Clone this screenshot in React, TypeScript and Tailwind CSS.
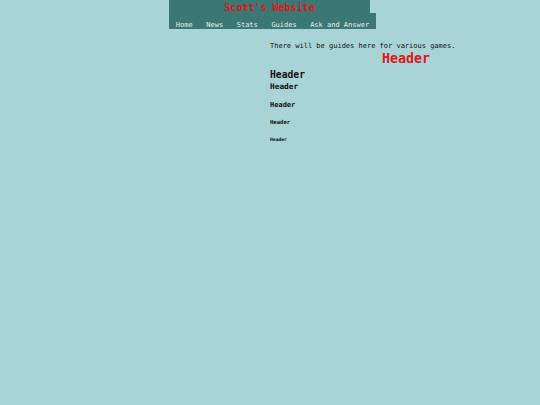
export default function App() {
  const mono = { fontFamily: '"DejaVu Sans Mono", "Liberation Mono", monospace' };
  return (
    <div className="min-h-[405px] w-[540px] bg-[#a8d4d5]" style={mono}>
      <div className="ml-[169px] flex flex-col items-start">
        <div className="flex h-[13px] w-[201px] items-end justify-center bg-[#3b7773] text-[10px] font-bold leading-[10px] text-[#e0141c]">
          Scott's Website
        </div>
        <div className="flex h-[16px] items-end whitespace-nowrap bg-[#3b7773] text-[7px] leading-[8px] text-[#e3efee]">
          <span className="px-[6.8px]">Home</span>
          <span className="px-[6.8px]">News</span>
          <span className="px-[6.8px]">Stats</span>
          <span className="px-[6.8px]">Guides</span>
          <span className="px-[6.7px]">Ask and Answer</span>
        </div>
      </div>
      <div className="ml-[270px] flex flex-col text-[#111]">
        <p className="mt-[12px] text-[7px] leading-[10px]">There will be guides here for various games.</p>
        <div className="pl-[2px] text-center text-[13.3px] font-bold leading-[16px] text-[#e0141c]">Header</div>
        <div className="mt-[2px] text-[9.7px] font-bold leading-[12px]">Header</div>
        <div className="mt-[0px] text-[7.8px] font-bold leading-[12px]">Header</div>
        <div className="mt-[6px] text-[7px] font-bold leading-[12px]">Header</div>
        <div className="mt-[5px] text-[5.6px] font-bold leading-[12px]">Header</div>
        <div className="mt-[6px] text-[4.7px] font-bold leading-[12px]">Header</div>
      </div>
    </div>
  );
}
